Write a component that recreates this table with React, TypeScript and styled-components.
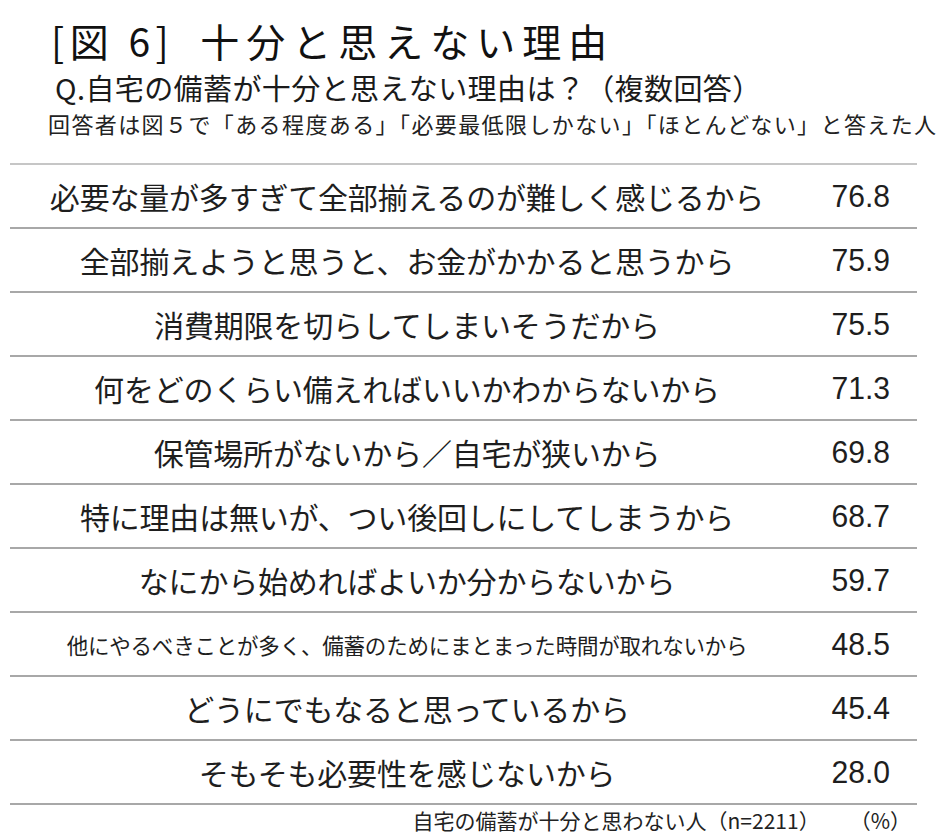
import React from 'react';
import styled, { createGlobalStyle } from 'styled-components';

const GlobalStyle = createGlobalStyle`
  html, body {
    margin: 0;
    padding: 0;
    background: #ffffff;
  }
  body {
    font-family: "Noto Sans CJK JP", "Noto Sans", sans-serif;
    color: #1a1a1a;
  }
`;

const Page = styled.div`
  width: 951px;
  height: 838px;
  box-sizing: border-box;
  padding-top: 16px;
  overflow: hidden;
`;

const Title = styled.h1`
  margin: 0;
  padding-left: 51px;
  display: flex;
  align-items: baseline;
  gap: 26px;
  font-size: 39px;
  line-height: 48px;
  font-weight: 400;
  color: #111;
  white-space: nowrap;
`;

const FigLabel = styled.span`
  letter-spacing: 5.5px;
  white-space: pre;
`;

const TitleText = styled.span`
  letter-spacing: 7px;
`;

const Question = styled.h2`
  margin: 6px 0 0;
  padding-left: 55px;
  font-size: 29px;
  line-height: 34px;
  font-weight: 400;
  letter-spacing: 0.4px;
  color: #1a1a1a;
  white-space: nowrap;
`;

const Note = styled.p`
  margin: 4px 0 0;
  padding-left: 48px;
  font-size: 22px;
  line-height: 30px;
  letter-spacing: 1.4px;
  white-space: nowrap;
  color: #222;
`;

const Table = styled.div`
  margin: 25px 0 0 10px;
  width: 907px;
  border-top: 2px solid #c6c6c6;
`;

const Row = styled.div`
  box-sizing: border-box;
  height: 64px;
  display: grid;
  grid-template-columns: 794px 1fr;
  align-items: center;
  border-bottom: 2px solid #a8a8a8;
`;

const Reason = styled.span<{ $small?: boolean }>`
  text-align: center;
  white-space: nowrap;
  font-size: ${(p) => (p.$small ? '21.5px' : '30px')};
  letter-spacing: -0.2px;
  color: #1e1e1e;
`;

const Value = styled.span`
  justify-self: end;
  padding-right: 29px;
  font-family: "Liberation Sans", Arial, sans-serif;
  font-size: 32px;
  line-height: 1;
  color: #1e1e1e;
  transform: scaleX(0.94);
  transform-origin: right center;
`;

const Footer = styled.div`
  margin-top: 2px;
  display: flex;
  justify-content: flex-end;
  gap: 30px;
  padding-right: 40px;
  font-size: 21px;
  line-height: 26px;
  color: #222;
  white-space: nowrap;
`;

const reasons: { label: string; value: string; small?: boolean }[] = [
  { label: '必要な量が多すぎて全部揃えるのが難しく感じるから', value: '76.8' },
  { label: '全部揃えようと思うと、お金がかかると思うから', value: '75.9' },
  { label: '消費期限を切らしてしまいそうだから', value: '75.5' },
  { label: '何をどのくらい備えればいいかわからないから', value: '71.3' },
  { label: '保管場所がないから／自宅が狭いから', value: '69.8' },
  { label: '特に理由は無いが、つい後回しにしてしまうから', value: '68.7' },
  { label: 'なにから始めればよいか分からないから', value: '59.7' },
  {
    label: '他にやるべきことが多く、備蓄のためにまとまった時間が取れないから',
    value: '48.5',
    small: true,
  },
  { label: 'どうにでもなると思っているから', value: '45.4' },
  { label: 'そもそも必要性を感じないから', value: '28.0' },
];

const App = () => {
  return (
    <Page>
      <GlobalStyle />
      <Title>
        <FigLabel>[図 6]</FigLabel>
        <TitleText>十分と思えない理由</TitleText>
      </Title>
      <Question>Q.自宅の備蓄が十分と思えない理由は？（複数回答）</Question>
      <Note>
        回答者は図５で「ある程度ある」「必要最低限しかない」「ほとんどない」と答えた人
      </Note>

      <Table>
        {reasons.map((r) => (
          <Row key={r.value}>
            <Reason $small={r.small}>{r.label}</Reason>
            <Value>{r.value}</Value>
          </Row>
        ))}
      </Table>

      <Footer>
        <span>自宅の備蓄が十分と思わない人（n=2211）</span>
        <span>（%）</span>
      </Footer>
    </Page>
  );
};

export default App;
